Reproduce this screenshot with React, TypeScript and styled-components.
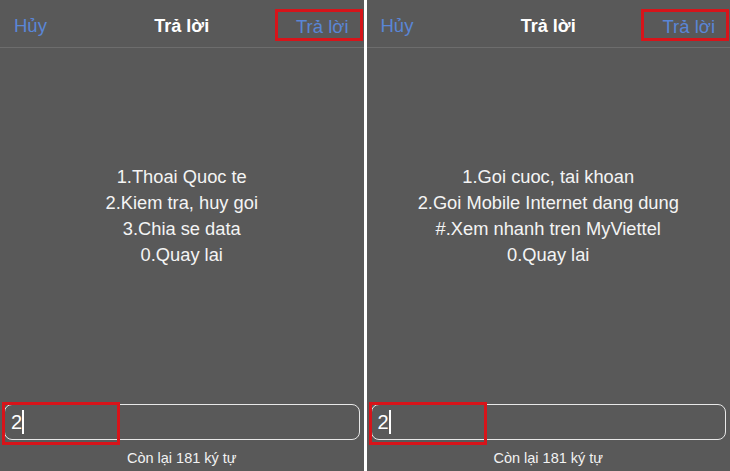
import React from 'react'
import styled, { createGlobalStyle } from 'styled-components'

const GlobalStyle = createGlobalStyle`
  html, body {
    margin: 0;
    padding: 0;
    background: #ffffff;
  }
  body {
    font-family: 'Liberation Sans', Arial, sans-serif;
  }
`

const screens = [
  {
    lines: ['1.Thoai Quoc te', '2.Kiem tra, huy goi', '3.Chia se data', '0.Quay lai'],
  },
  {
    lines: [
      '1.Goi cuoc, tai khoan',
      '2.Goi Mobile Internet dang dung',
      '#.Xem nhanh tren MyViettel',
      '0.Quay lai',
    ],
  },
]

const ReplyScreen = ({ lines }: { lines: string[] }) => {
  return (
    <Panel>
      <Header>
        <NavButton>Hủy</NavButton>
        <Title>Trả lời</Title>
        <SendButton>
          <span>Trả lời</span>
        </SendButton>
      </Header>
      <Body>
        <Menu>
          {lines.map((line) => (
            <MenuLine key={line}>{line}</MenuLine>
          ))}
        </Menu>
      </Body>
      <Footer>
        <InputBox>
          <InputText>2</InputText>
          <Caret />
          <Highlight />
        </InputBox>
        <Counter>Còn lại 181 ký tự</Counter>
      </Footer>
    </Panel>
  )
}

export default function App() {
  return (
    <>
      <GlobalStyle />
      <Page>
        <ReplyScreen lines={screens[0].lines} />
        <Divider />
        <ReplyScreen lines={screens[1].lines} />
      </Page>
    </>
  )
}

const Page = styled.div`
  display: flex;
  width: 730px;
  height: 471px;
  overflow: hidden;
`

const Divider = styled.div`
  width: 3px;
  background: #ffffff;
  flex-shrink: 0;
`

const Panel = styled.div`
  flex: 1;
  display: flex;
  flex-direction: column;
  background: #595959;
  color: #f2f2f2;
  min-width: 0;
`

const Header = styled.div`
  height: 47px;
  display: flex;
  align-items: center;
  justify-content: space-between;
  border-bottom: 1px solid #6d6d6d;
  padding: 0 1px 0 14px;
  position: relative;
`

const NavButton = styled.span`
  color: #5a86d6;
  font-size: 18.5px;
  padding-top: 5px;
`

const Title = styled.span`
  position: absolute;
  left: 0;
  right: 0;
  top: 16px;
  text-align: center;
  font-weight: bold;
  font-size: 18px;
  color: #ffffff;
  pointer-events: none;
`

const SendButton = styled.span`
  color: #5a86d6;
  font-size: 18.5px;
  width: 88px;
  height: 32px;
  box-sizing: border-box;
  border: 3px solid #d7141a;
  display: flex;
  align-items: center;
  justify-content: flex-end;
  padding: 3px 11px 0 0;
  margin-top: 3px;
`

const Body = styled.div`
  flex: 1;
  display: flex;
  justify-content: center;
`

const Menu = styled.div`
  margin-top: 116px;
  text-align: center;
`

const MenuLine = styled.div`
  font-size: 18.3px;
  line-height: 26px;
  color: #f4f4f4;
  white-space: nowrap;
`

const Footer = styled.div`
  display: flex;
  flex-direction: column;
  padding: 0 4px;
`

const InputBox = styled.div`
  position: relative;
  height: 36px;
  box-sizing: border-box;
  border: 1px solid #e8e8e8;
  border-radius: 8px;
  display: flex;
  align-items: center;
  padding-left: 6px;
`

const InputText = styled.span`
  font-size: 20px;
  color: #ffffff;
`

const Caret = styled.span`
  width: 2px;
  height: 24px;
  background: #ffffff;
`

const Highlight = styled.span`
  position: absolute;
  left: -3px;
  top: -3px;
  width: 118px;
  height: 43px;
  box-sizing: border-box;
  border: 3px solid #d7141a;
`

const Counter = styled.div`
  text-align: center;
  font-size: 14.5px;
  line-height: 19px;
  margin: 9px 0 3px;
  color: #f2f2f2;
`
